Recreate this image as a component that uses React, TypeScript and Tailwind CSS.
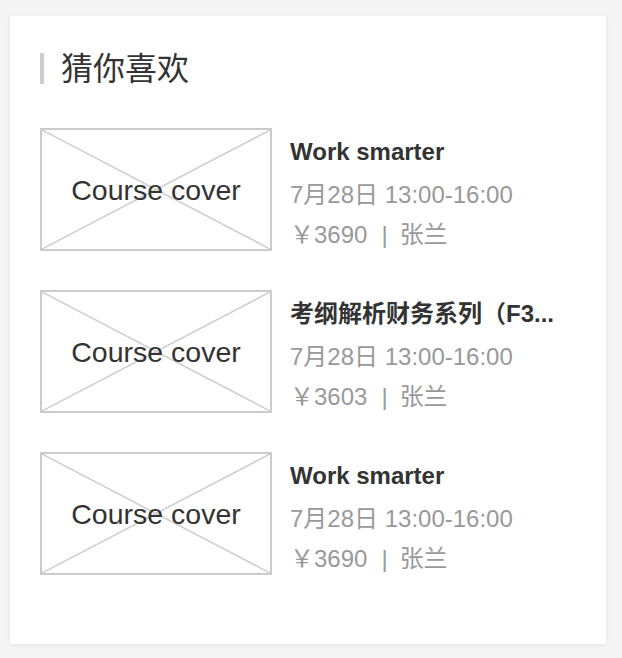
import React from 'react';

interface Course {
  title: string;
  time: string;
  price: string;
  teacher: string;
}

const courses: Course[] = [
  { title: 'Work smarter', time: '7月28日 13:00-16:00', price: '3690', teacher: '张兰' },
  { title: '考纲解析财务系列（F3...', time: '7月28日 13:00-16:00', price: '3603', teacher: '张兰' },
  { title: 'Work smarter', time: '7月28日 13:00-16:00', price: '3690', teacher: '张兰' },
];

function CoverPlaceholder() {
  return (
    <div className="relative w-[232px] h-[123px] shrink-0 border-2 border-[#cccccc] flex items-center justify-center">
      {/* crossed placeholder */}
      <svg className="absolute inset-0 w-full h-full" viewBox="0 0 228 119" preserveAspectRatio="none">
        <line x1="0" y1="0" x2="228" y2="119" stroke="#cccccc" strokeWidth="1.5" />
        <line x1="228" y1="0" x2="0" y2="119" stroke="#cccccc" strokeWidth="1.5" />
      </svg>
      <span className="relative text-[28.5px] leading-[32px] text-[#333333]">Course cover</span>
    </div>
  );
}

export default function App() {
  return (
    <div
      className="min-h-[658px] bg-[#f5f5f5] pt-[16px] pl-[10px]"
      style={{ fontFamily: "'Liberation Sans', 'Noto Sans CJK SC', sans-serif" }}
    >
      <div className="w-[596px] bg-white pt-[36px] px-[30px] pb-[30px] shadow-[0_1px_4px_rgba(0,0,0,0.08)]">
        {/* Header */}
        <div className="flex items-center mb-[43px]">
          <div className="w-[4px] h-[31px] bg-[#cccccc]" />
          <h2 className="ml-[17px] text-[32px] leading-[31px] pt-[2px] text-[#333333]">猜你喜欢</h2>
        </div>

        {/* List */}
        {courses.map((course, index) => (
          <div key={index} className="flex items-start mb-[39px]">
            <CoverPlaceholder />
            <div className="ml-[18px] pt-[10px] min-w-0 flex-1">
              <h3 className="text-[24px] leading-[28px] font-bold text-[#333333] truncate">{course.title}</h3>
              <p className="mt-[15px] text-[24px] leading-[28px] text-[#999999]">{course.time}</p>
              <p className="mt-[12px] text-[24px] leading-[28px] text-[#999999]">
                ￥{course.price}
                <span className="ml-[14px] mr-[12px]">|</span>
                {course.teacher}
              </p>
            </div>
          </div>
        ))}
      </div>
    </div>
  );
}
